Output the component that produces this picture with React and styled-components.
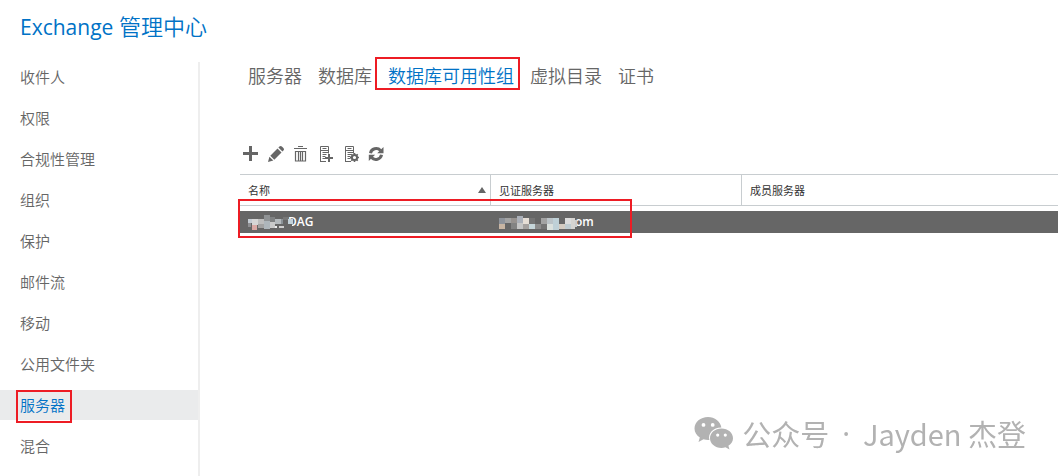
import React, { useState } from "react";
import styled, { createGlobalStyle } from "styled-components";

const GlobalStyle = createGlobalStyle`
  * {
    box-sizing: border-box;
  }

  body {
    margin: 0;
    background-color: #ffffff;
    color: #666666;
    font-family: "Open Sans", "Noto Sans CJK SC", sans-serif;
    font-weight: 350;
  }
`;

const navItems = ["收件人", "权限", "合规性管理", "组织", "保护", "邮件流", "移动", "公用文件夹", "服务器", "混合"];
const tabs = ["服务器", "数据库", "数据库可用性组", "虚拟目录", "证书"];

// x, y, width, height, colour
const nameBlocks = [
  [0, 5, 4, 4, "#c4cbd3"], [0, 9, 3, 4, "#8f8f92"], [4, 5, 6, 6, "#d6d6d6"],
  [4, 11, 5, 5, "#d9a8a4"], [10, 5, 6, 5, "#bdbdbd"], [10, 10, 6, 4, "#a2a2a2"],
  [16, 1, 6, 6, "#8f9294"], [16, 7, 6, 8, "#aeb6bb"], [22, 3, 5, 5, "#7f8182"],
  [22, 8, 5, 6, "#c9c9c9"], [27, 5, 6, 5, "#b5babd"], [27, 12, 2, 2, "#eeeeee"],
  [31, 12, 5, 2, "#d0d0d0"], [33, 5, 2, 5, "#8b9297"], [35, 3, 6, 3, "#777777"],
  [40, 5, 5, 5, "#c3d2da"], [40, 10, 4, 3, "#666666"],
];
const witnessBlocks = [
  [0, 4, 6, 6, "#8e939b"], [0, 10, 6, 5, "#c8b5a3"], [6, 4, 6, 5, "#a3a3a3"],
  [12, 4, 6, 5, "#97928f"], [12, 9, 6, 6, "#838383"], [18, 2, 6, 7, "#abb0b9"],
  [18, 9, 6, 6, "#c6c6c6"], [24, 4, 6, 6, "#e6ded6"], [24, 10, 6, 5, "#a5a19f"],
  [30, 4, 6, 6, "#747474"], [30, 10, 6, 5, "#c6d6da"], [36, 10, 6, 5, "#8c8c8c"],
  [42, 4, 6, 6, "#a3a3a3"], [42, 10, 6, 5, "#747474"], [48, 4, 6, 6, "#bbc3c8"],
  [48, 10, 6, 6, "#dbe1de"], [54, 4, 6, 12, "#bfd0d7"], [60, 10, 6, 5, "#d4cbc1"],
  [66, 4, 6, 6, "#dcdcdc"], [66, 10, 6, 5, "#bfcbd0"], [72, 4, 4, 11, "#d6d4d1"],
  [76, 6, 2, 7, "#cccccc"],
];

function Mosaic({ blocks, width }) {
  return (
    <MosaicSvg width={width} height="18" aria-hidden="true">
      {blocks.map(([x, y, w, h, fill], i) => (
        <rect key={i} x={x} y={y} width={w} height={h} fill={fill} />
      ))}
    </MosaicSvg>
  );
}

function ServerLines() {
  return (
    <path
      d="M2.5 15.5V.5h8v7M2 15.5h6M4.5 2.5h4M2 4.5h8M4.5 6.5h6M4.5 8.5h4M4.5 10.5h3M4.5 12.5h3"
      fill="none"
      stroke="#666666"
    />
  );
}

const tools = [
  {
    label: "新建",
    icon: <path d="M6 0h3v6h6v3H9v6H6V9H0V6h6z" />,
  },
  {
    label: "编辑",
    icon: (
      <path d="M0 16l1.4-5.3 3.9 3.9zM2.3 9.7l7.2-7.2 4 4-7.2 7.2zM10.4 1.6l1-1q1.2-1.2 2.5 0l1.5 1.5q1.2 1.3 0 2.5l-1 1z" />
    ),
  },
  {
    label: "删除",
    icon: (
      <path
        d="M5 .5h5M1 2.5h13M2.5 5v10h10V5M2 5.5h11M5.500 5v10M7.500 5v10M9.500 5v10"
        fill="none"
        stroke="#666666"
        strokeWidth="1.2"
      />
    ),
  },
  {
    label: "管理成员",
    icon: (
      <>
        <ServerLines />
        <path d="M10 8h2v3h3v2h-3v3h-2v-3H7v-2h3z" />
      </>
    ),
  },
  {
    label: "管理网络",
    icon: (
      <>
        <ServerLines />
        <circle cx="11.5" cy="11.5" r="2.6" fill="none" stroke="#666666" strokeWidth="2" />
        <path
          d="M11.5 7v2M11.5 14v2M7 11.5h2M14 11.5h2M8.3 8.3l1.4 1.4M13.3 13.3l1.4 1.4M8.3 14.7l1.4-1.4M13.3 9.7l1.4-1.4"
          fill="none"
          stroke="#666666"
          strokeWidth="1.6"
        />
      </>
    ),
  },
  {
    label: "刷新",
    icon: (
      <>
        <path d="M2.5 7.2A5.7 5.4 0 0 1 12.5 4.5M13.5 8.8A5.7 5.4 0 0 1 3.5 11.5" fill="none" stroke="#666666" strokeWidth="3" />
        <path d="M15.5 1v6.3H9.2zM.8 15V8.7h6.3z" />
      </>
    ),
  },
];

export default function App() {
  const [section, setSection] = useState("服务器");
  const [tab, setTab] = useState("数据库可用性组");

  return (
    <>
      <GlobalStyle />
      <Page>
        <Title>
          <Product>Exchange</Product> 管理中心
        </Title>
        <Columns>
          <Sidebar>
            {navItems.map((item) => (
              <NavLink key={item} href="#" $active={item === section} onClick={() => setSection(item)}>
                <NavText $marked={item === "服务器"}>{item}</NavText>
              </NavLink>
            ))}
          </Sidebar>

          <Main>
            <Tabs>
              {tabs.map((item) => (
                <Tab
                  key={item}
                  href="#"
                  $active={item === tab}
                  $marked={item === "数据库可用性组"}
                  onClick={() => setTab(item)}
                >
                  {item}
                </Tab>
              ))}
            </Tabs>

            <Toolbar>
              {tools.map(({ label, icon }) => (
                <ToolButton key={label} type="button" aria-label={label}>
                  <svg width="16" height="16" viewBox="0 0 16 16" fill="#666666">
                    {icon}
                  </svg>
                </ToolButton>
              ))}
            </Toolbar>

            <Table>
              <colgroup>
                <NameCol />
                <NameCol />
                <col />
              </colgroup>
              <thead>
                <tr>
                  <HeadCell>
                    <HeadContent>
                      名称
                      <svg width="8" height="6" fill="#666666" aria-hidden="true">
                        <path d="M4 0l4 6H0z" />
                      </svg>
                    </HeadContent>
                  </HeadCell>
                  <HeadCell>见证服务器</HeadCell>
                  <HeadCell>成员服务器</HeadCell>
                </tr>
              </thead>
              <tbody>
                <Row>
                  <Cell>
                    <CellContent $indent={40}>
                      DAG
                      <Mosaic blocks={nameBlocks} width={50} />
                    </CellContent>
                    <RowMark />
                  </Cell>
                  <Cell>
                    <CellContent $indent={70}>
                      com
                      <Mosaic blocks={witnessBlocks} width={79} />
                    </CellContent>
                  </Cell>
                  <Cell />
                </Row>
              </tbody>
            </Table>
          </Main>
        </Columns>
      </Page>

      <Watermark>
        <svg width="40" height="34" viewBox="0 0 40 34" fill="#b2b2b2" aria-hidden="true">
          <path
            fillRule="evenodd"
            d="M14 1C6.5 1 .5 6 .5 12.500c0 3.700 2 6.800 5.300 9L4.500 26l5-2.700c1.500.5 3 .7 4.700.7h1.200c-1.900-6.800 4.300-12.800 12-12.600C26.300 5.300 20.800 1 14 1zM9.500 7a1.900 1.900 0 1 1 0 3.800a1.900 1.900 0 0 1 0-3.800zM18.700 7a1.900 1.900 0 1 1 0 3.800a1.900 1.900 0 0 1 0-3.800z"
          />
          <path
            fillRule="evenodd"
            d="M27.500 12.500c-6.500 0-11.500 4.300-11.500 9.700s5 9.700 11.500 9.700c1.400 0 2.700-.2 4-.6l4 2.200-1.100-3.700c2.900-1.800 4.600-4.500 4.600-7.600 0-5.400-5-9.700-11.500-9.700zM23.700 17.500a1.600 1.600 0 1 1 0 3.200a1.600 1.600 0 0 1 0-3.200zM31.300 17.500a1.600 1.600 0 1 1 0 3.200a1.600 1.600 0 0 1 0-3.200z"
          />
        </svg>
        <span>公众号</span>
        <Dot>·</Dot>
        <span>Jayden 杰登</span>
      </Watermark>
    </>
  );
}

const Page = styled.div`
  display: flex;
  flex-direction: column;
  min-height: 100vh;
`;

const Title = styled.h1`
  margin: 0;
  padding: 10px 20px 19px;
  color: #0072c6;
  font-size: 22px;
  font-weight: 350;
  line-height: 32px;
`;

const Product = styled.span`
  font-size: 21px;
  font-weight: 400;
`;

const Columns = styled.div`
  display: flex;
  flex: 1;
`;

const Sidebar = styled.nav`
  display: flex;
  flex-direction: column;
  gap: 11px;
  flex: 0 0 200px;
  border-right: 2px solid #eeeeee;
`;

const NavLink = styled.a`
  padding: 0 20px;
  background-color: ${({ $active }) => ($active ? "#eaebec" : "transparent")};
  color: ${({ $active }) => ($active ? "#0072c6" : "#666666")};
  font-size: 15px;
  line-height: 30px;
  text-decoration: none;
`;

const marker = `
  content: "";
  position: absolute;
  box-sizing: border-box;
  border: 2px solid #ed1c24;
  pointer-events: none;
`;

const NavText = styled.span`
  position: relative;

  &::after {
    ${({ $marked }) => $marked && marker}
    inset: -5px -7px -8px -4px;
  }
`;

const Main = styled.main`
  flex: 1;
  min-width: 0;
  padding-left: 40px;
`;

const Tabs = styled.nav`
  display: flex;
  gap: 16px;
  padding-left: 8px;
`;

const Tab = styled.a`
  position: relative;
  color: ${({ $active }) => ($active ? "#0072c6" : "#666666")};
  font-size: 18px;
  line-height: 28px;
  text-decoration: none;
  white-space: nowrap;

  &::after {
    ${({ $marked }) => $marked && marker}
    inset: -5px -6px 0 -13px;
  }
`;

const Toolbar = styled.div`
  display: flex;
  gap: 9px;
  padding: 56px 0 12px 3px;
`;

const ToolButton = styled.button`
  display: flex;
  padding: 0;
  border: none;
  background: none;
  cursor: pointer;
`;

const Table = styled.table`
  width: 100%;
  border-collapse: separate;
  border-spacing: 0;
  table-layout: fixed;
  font-size: 11px;

  tbody::before {
    content: "";
    display: block;
    height: 5px;
  }
`;

const NameCol = styled.col`
  width: 251px;
`;

const HeadCell = styled.th`
  height: 32px;
  padding: 0 8px;
  border-top: 1px solid #c8cdd0;
  border-bottom: 1px solid #c8cdd0;
  color: #333333;
  font-weight: 400;
  text-align: left;

  &:not(:last-child) {
    border-right: 1px solid #c8cdd0;
  }
`;

const HeadContent = styled.div`
  display: flex;
  align-items: center;
  justify-content: space-between;
  margin-right: -4px;
`;

const Row = styled.tr`
  background-color: #666666;
`;

const Cell = styled.td`
  position: relative;
  height: 22px;
  padding: 0 8px;
  color: #ffffff;
  font-size: 12px;
  font-weight: 600;
`;

const CellContent = styled.div`
  position: relative;
  padding-left: ${({ $indent }) => $indent}px;
  line-height: 22px;
`;

const MosaicSvg = styled.svg`
  position: absolute;
  top: 3px;
  left: 0;
`;

const RowMark = styled.span`
  &::after {
    ${marker}
    top: -12px;
    left: -2px;
    width: 394px;
    height: 39px;
  }
`;

const Watermark = styled.div`
  position: fixed;
  right: 32px;
  bottom: 23px;
  display: flex;
  align-items: center;
  gap: 8px;
  color: #b2b2b2;
  font-family: "Noto Sans CJK SC", sans-serif;
  font-size: 29px;
  font-weight: 400;
  line-height: 40px;
  white-space: nowrap;
`;

const Dot = styled.span`
  padding: 0 5px;
  font-family: "Noto Sans", sans-serif;
`;
